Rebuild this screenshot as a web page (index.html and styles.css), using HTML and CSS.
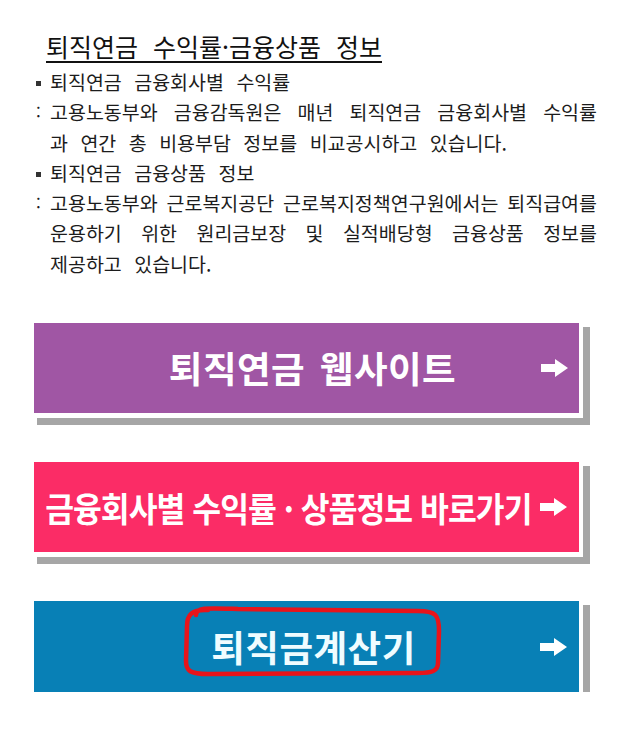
FILE: index.html
```html
<!DOCTYPE html>
<html lang="ko">
<head>
<meta charset="utf-8">
<link rel="stylesheet" href="styles.css">
</head>
<body>
<div class="page">
  <h1 class="title">퇴직연금 수익률·금융상품 정보</h1>
  <ul class="info">
    <li class="row"><span class="mark"><span class="square"></span></span><span class="line">퇴직연금 금융회사별 수익률</span></li>
    <li class="row"><span class="mark">:</span>
      <span class="para">
        <span class="jline">고용노동부와 금융감독원은 매년 퇴직연금 금융회사별 수익률</span>
        <span class="line">과 연간 총 비용부담 정보를 비교공시하고 있습니다.</span>
      </span>
    </li>
    <li class="row"><span class="mark"><span class="square"></span></span><span class="line">퇴직연금 금융상품 정보</span></li>
    <li class="row"><span class="mark">:</span>
      <span class="para">
        <span class="jline">고용노동부와 근로복지공단 근로복지정책연구원에서는 퇴직급여를</span>
        <span class="jline">운용하기 위한 원리금보장 및 실적배당형 금융상품 정보를</span>
        <span class="line">제공하고 있습니다.</span>
      </span>
    </li>
  </ul>

  <div class="buttons">
    <a class="btn btn-purple">
      <span class="label">퇴직연금 웹사이트</span>
      <svg class="arrow" viewBox="0 0 27 18" width="27" height="18"><polygon points="0,5 14,5 14,0 27,9 14,18 14,13 0,13" fill="#fff"/></svg>
    </a>
    <a class="btn btn-pink">
      <span class="label"><span class="narrow">금융회사별 수익률 · 상품정보 바로가기</span></span>
      <svg class="arrow" viewBox="0 0 27 18" width="27" height="18"><polygon points="0,5 14,5 14,0 27,9 14,18 14,13 0,13" fill="#fff"/></svg>
    </a>
    <a class="btn btn-blue">
      <span class="label">퇴직금계산기</span>
      <svg class="arrow" viewBox="0 0 27 18" width="27" height="18"><polygon points="0,5 14,5 14,0 27,9 14,18 14,13 0,13" fill="#fff"/></svg>
      <svg class="circle" viewBox="0 0 268 82" width="268" height="82"><path d="M 18 14 C 18 6, 30 7, 60 8 L 240 10 C 258 10, 261 14, 261 30 L 260 62 C 260 70, 254 72, 240 72 L 30 73 C 12 73, 8 70, 8 60 L 9 25 C 9 14, 14 8, 30 9" fill="none" stroke="#e8141b" stroke-width="4.5" stroke-linecap="round" stroke-linejoin="round"/></svg>
    </a>
  </div>
</div>
</body>
</html>
```

FILE: styles.css
```css
html, body {
  margin: 0;
  padding: 0;
  background: #ffffff;
}

.page {
  font-family: "Noto Sans CJK KR", "Noto Sans", sans-serif;
  color: #1c1c1c;
  padding-top: 31px;
}

.title {
  margin: 0 0 0 46px;
  font-size: 25px;
  font-weight: 400;
  line-height: 30px;
  word-spacing: 8px;
  color: #111;
  text-decoration: underline;
  text-decoration-thickness: 2px;
  text-underline-offset: 4px;
  display: inline-block;
}

.info {
  list-style: none;
  margin: 5px 0 0 0;
  padding: 0 34px 0 32px;
  font-size: 19.5px;
  line-height: 30.3px;
}

.row {
  display: grid;
  grid-template-columns: 18px 1fr;
}

.mark {
  display: flex;
  align-items: center;
  height: 30.3px;
  font-size: 17px;
  padding-left: 4px;
}

.square {
  width: 5px;
  height: 5px;
  background: #333;
  margin-top: 2px;
}

.para {
  display: flex;
  flex-direction: column;
}

.line {
  display: block;
  white-space: nowrap;
  word-spacing: 7px;
}

.jline {
  display: block;
  white-space: nowrap;
  text-align: justify;
  text-align-last: justify;
}

.buttons {
  display: flex;
  flex-direction: column;
  gap: 49px;
  margin-top: 44px;
  padding-left: 34px;
}

.btn {
  width: 545px;
  height: 90px;
  display: grid;
  grid-template-areas: "stack";
  align-items: center;
  position: relative;
  color: #fff;
  font-weight: 700;
  box-shadow: 2px 3px 0 2px #ffffff, 7px 8px 0 4px #a6a6a6;
}

.btn-purple { background: #a056a4; }
.btn-pink { background: #fb2c66; }
.btn-blue { background: #0880b6; height: 91px; color: #effcff; }

.label {
  grid-area: stack;
  justify-self: center;
  font-size: 36.5px;
  line-height: 40px;
  white-space: nowrap;
}

.btn-purple .label { margin-left: 12px; word-spacing: 4px; letter-spacing: 0.5px; }
.btn-blue .label { margin-left: 14px; letter-spacing: 0.5px; }
.btn-pink .label { margin-left: -36px; }

.narrow {
  display: inline-block;
  font-size: 34px;
  transform: scaleX(0.92);
  letter-spacing: -1px;
  word-spacing: 0px;
}

.arrow {
  grid-area: stack;
  justify-self: end;
  margin-right: 11px;
}

.btn-pink .arrow, .btn-blue .arrow { margin-right: 12px; }

.circle {
  position: absolute;
  left: 144px;
  top: 0px;
}
```
